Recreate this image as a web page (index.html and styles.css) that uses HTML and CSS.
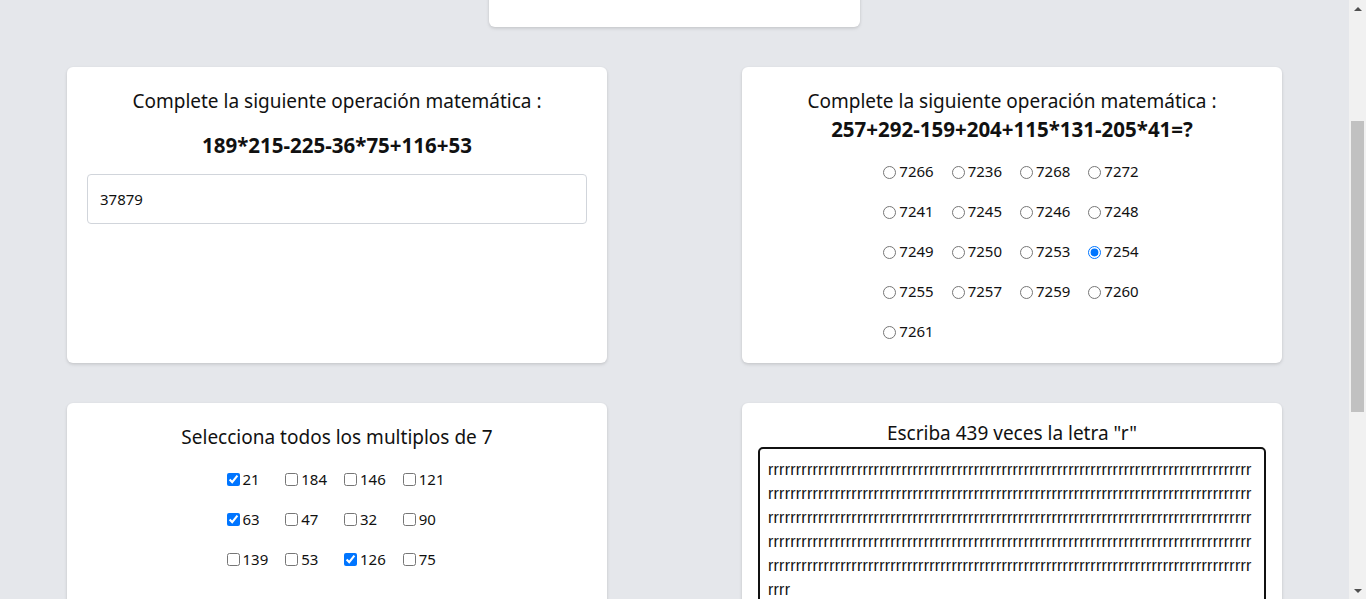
FILE: index.html
```html
<!DOCTYPE html>
<html lang="es">
<head>
<meta charset="utf-8">
<title>Cuestionario</title>
<link rel="stylesheet" href="styles.css">
</head>
<body>
<div class="screen">
  <div class="viewport" id="viewport">
    <main class="page">
      <section class="card card-top" id="topCard"></section>

      <div class="grid">
        <section class="card">
          <h2 class="title">Complete la siguiente operación matemática :</h2>
          <p class="expr expr-spaced">189*215-225-36*75+116+53</p>
          <input class="answer" type="text" value="37879">
        </section>

        <section class="card">
          <h2 class="title">Complete la siguiente operación matemática :</h2>
          <p class="expr">257+292-159+204+115*131-205*41=?</p>
          <div class="options">
            <label class="opt"><input type="radio" name="op">7266</label>
            <label class="opt"><input type="radio" name="op">7236</label>
            <label class="opt"><input type="radio" name="op">7268</label>
            <label class="opt"><input type="radio" name="op">7272</label>
            <label class="opt"><input type="radio" name="op">7241</label>
            <label class="opt"><input type="radio" name="op">7245</label>
            <label class="opt"><input type="radio" name="op">7246</label>
            <label class="opt"><input type="radio" name="op">7248</label>
            <label class="opt"><input type="radio" name="op">7249</label>
            <label class="opt"><input type="radio" name="op">7250</label>
            <label class="opt"><input type="radio" name="op">7253</label>
            <label class="opt"><input type="radio" name="op" checked>7254</label>
            <label class="opt"><input type="radio" name="op">7255</label>
            <label class="opt"><input type="radio" name="op">7257</label>
            <label class="opt"><input type="radio" name="op">7259</label>
            <label class="opt"><input type="radio" name="op">7260</label>
            <label class="opt"><input type="radio" name="op">7261</label>
          </div>
        </section>

        <section class="card">
          <h2 class="title">Selecciona todos los multiplos de 7</h2>
          <div class="options options-check">
            <label class="opt"><input type="checkbox" checked>21</label>
            <label class="opt"><input type="checkbox">184</label>
            <label class="opt"><input type="checkbox">146</label>
            <label class="opt"><input type="checkbox">121</label>
            <label class="opt"><input type="checkbox" checked>63</label>
            <label class="opt"><input type="checkbox">47</label>
            <label class="opt"><input type="checkbox">32</label>
            <label class="opt"><input type="checkbox">90</label>
            <label class="opt"><input type="checkbox">139</label>
            <label class="opt"><input type="checkbox">53</label>
            <label class="opt"><input type="checkbox" checked>126</label>
            <label class="opt"><input type="checkbox">75</label>
          </div>
        </section>

        <section class="card card-tight">
          <h2 class="title">Escriba 439 veces la letra "r"</h2>
          <textarea class="letters" id="letters"></textarea>
        </section>
      </div>
    </main>
  </div>

  <div class="scrollbar" aria-hidden="true">
    <div class="sb-btn"><span class="arrow arrow-up"></span></div>
    <div class="sb-track"><div class="sb-thumb"></div></div>
    <div class="sb-btn"><span class="arrow arrow-down"></span></div>
  </div>
</div>
<script src="script.js"></script>
</body>
</html>
```

FILE: styles.css
```css
* { box-sizing: border-box; }

html, body {
  margin: 0;
  height: 100%;
  overflow: hidden;
}

body {
  font-family: "Noto Sans", "Open Sans", sans-serif;
  color: #111;
  background: #e5e7eb;
}

.screen {
  display: flex;
  height: 599px;
}

.viewport {
  flex: 1;
  overflow: hidden;
  position: relative;
}

.page {
  padding: 40px 0 80px;
}

.card {
  background: #fff;
  border-radius: 6px;
  box-shadow: 0 1px 3px rgba(0,0,0,0.10), 0 2px 4px rgba(0,0,0,0.06);
  padding: 20px;
  text-align: center;
}

.card-top {
  width: 371px;
  height: 200px;
  margin: 0 auto;
}

.grid {
  width: 1215px;
  margin: 40px auto 0;
  display: grid;
  grid-template-columns: 540px 540px;
  justify-content: space-between;
  row-gap: 40px;
}

.title {
  margin: 0;
  font-size: 19px;
  line-height: 28px;
  font-weight: 400;
}

.expr {
  margin: 0;
  font-size: 20.5px;
  line-height: 28px;
  font-weight: 700;
}

.expr-spaced { margin-top: 16px; }

.answer {
  display: block;
  width: 100%;
  margin-top: 15px;
  height: 50px;
  padding: 12px;
  border: 1px solid #d1d5db;
  border-radius: 4px;
  font-family: inherit;
  font-size: 15px;
  color: #111;
  outline: none;
}

.options {
  display: grid;
  grid-template-columns: repeat(4, auto);
  justify-content: center;
  column-gap: 13px;
  row-gap: 16px;
  margin-top: 16px;
  padding-right: 7px;
  text-align: left;
}

.options-check { column-gap: 13px; }

.opt {
  display: flex;
  align-items: center;
  font-size: 15px;
  line-height: 24px;
  height: 24px;
}

.opt input { flex: none; }

.card-tight { padding: 16px; }

.letters {
  display: block;
  width: 100%;
  height: 180px;
  margin: 0;
  padding: 9px 10px 9px 8px;
  border: 2px solid #111;
  border-radius: 5px;
  font-family: "Liberation Sans", Arial, sans-serif;
  font-size: 16px;
  letter-spacing: 0.23px;
  line-height: 24px;
  color: #111;
  resize: none;
  overflow: hidden;
  outline: none;
}

.scrollbar {
  width: 17px;
  flex: none;
  display: flex;
  flex-direction: column;
  background: #f1f1f1;
}

.sb-btn {
  height: 17px;
  display: flex;
  align-items: center;
  justify-content: center;
}

.arrow {
  width: 0;
  height: 0;
  border-left: 4px solid transparent;
  border-right: 4px solid transparent;
}

.arrow-up { border-bottom: 4px solid #505050; }
.arrow-down { border-top: 4px solid #505050; }

.sb-track {
  flex: 1;
  padding: 0 2px;
}

.sb-thumb {
  margin-top: 104px;
  height: 291px;
  background: #c1c1c1;
}
```

FILE: script.js
```js
(function () {
  document.getElementById('letters').value = 'r'.repeat(439);
  var vp = document.getElementById('viewport');
  var card = document.getElementById('topCard');
  vp.scrollTop = card.getBoundingClientRect().bottom - 27;
})();
```
